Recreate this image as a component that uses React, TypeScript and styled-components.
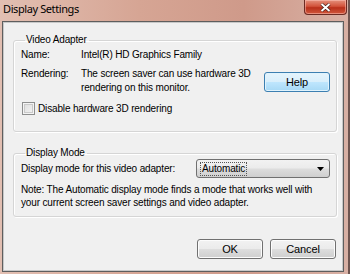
import styled, { createGlobalStyle } from "styled-components";

const GlobalStyle = createGlobalStyle`
  html, body {
    margin: 0;
    padding: 0;
    width: 350px;
    height: 274px;
    overflow: hidden;
  }
  body {
    font-family: "Liberation Sans", Arial, sans-serif;
    font-size: 10px;
    letter-spacing: -0.15px;
    white-space: nowrap;
    color: #000;
  }
`

const Window = styled.div`
  width: 350px;
  height: 274px;
  display: flex;
  flex-direction: column;
  background: linear-gradient(90deg, #e2bfb2 0%, #d6a594 40%, #cf9a8a 70%, #d8b0a4 100%);
  box-sizing: border-box;
  border-right: 2px solid #6e5550;
`

const TitleBar = styled.div`
  height: 21px;
  display: flex;
  justify-content: space-between;
  align-items: flex-start;
  padding-left: 3px;
  flex-shrink: 0;
`

const Title = styled.div`
  font-family: "Noto Sans", sans-serif;
  font-size: 11px;
  line-height: 12px;
  margin-top: 3px;
  letter-spacing: -0.4px;
`

const CloseButton = styled.div`
  width: 41px;
  height: 14px;
  margin-right: 1px;
  border: 1px solid #6b2a22;
  border-top: none;
  border-radius: 0 0 4px 4px;
  background: linear-gradient(180deg, #e4917d 0%, #d2533b 45%, #b8301a 55%, #d0573c 100%);
  display: flex;
  align-items: center;
  justify-content: center;
  box-shadow: inset 0 0 0 1px rgba(255, 200, 190, 0.5);
`

const Client = styled.div`
  flex: 1;
  margin: 0 4px 2px 2px;
  background: #f0f0f0;
  border: 1px solid #5e5e5e;
  box-shadow: inset 0 0 0 1px #c8c8c8;
  display: flex;
  flex-direction: column;
  padding: 12px 6px 0 10px;
`

const Group = styled.fieldset<{ height: number }>`
  margin: 0;
  height: ${(p) => p.height}px;
  box-sizing: border-box;
  border: 1px solid #d5d5d5;
  border-radius: 3px;
  box-shadow: inset 1px 1px 0 #fff, 1px 1px 0 #fff;
  padding: 0 7px;
  min-width: 0;
`

const Legend = styled.legend`
  padding: 0 2px 0 1px;
  margin-left: 4px;
  line-height: 12px;
`

const InfoRow = styled.div<{ gap: number }>`
  display: flex;
  align-items: flex-start;
  margin-top: ${(p) => p.gap}px;
  line-height: 14px;
`

const Label = styled.div`
  width: 60px;
  flex-shrink: 0;
`

const Value = styled.div`
  flex: 1;
`

const Button = styled.div<{ width: number }>`
  width: ${(p) => p.width}px;
  height: 20px;
  box-sizing: border-box;
  border: 1px solid #707070;
  border-radius: 3px;
  background: linear-gradient(180deg, #f2f2f2 0%, #ebebeb 48%, #dddddd 52%, #cfcfcf 100%);
  box-shadow: inset 0 0 0 1px #fcfcfc;
  display: flex;
  align-items: center;
  justify-content: center;
  font-size: 11px;
`

const FocusButton = styled(Button)`
  border-color: #3c7fb1;
  background: linear-gradient(180deg, #e5f4fc 0%, #d9effb 48%, #bee6fd 52%, #a7d9f5 100%);
  box-shadow: inset 0 0 0 1px #e0f3fd;
  margin-top: 5px;
  margin-right: -1px;
`

const CheckRow = styled.label`
  display: flex;
  align-items: center;
  gap: 3px;
  margin-top: 7px;
  margin-left: 1px;
`

const CheckBox = styled.span`
  width: 11px;
  height: 11px;
  border: 1px solid #8e8f8f;
  background: linear-gradient(135deg, #dcdcdc 0%, #f5f5f5 100%);
  box-shadow: inset 0 0 0 1px #f4f4f4, inset 0 0 0 2px #cacaca;
  flex-shrink: 0;
`

const ModeRow = styled.div`
  display: flex;
  justify-content: space-between;
  align-items: center;
  margin-top: 0;
  line-height: 14px;
`

const Select = styled.div`
  width: 134px;
  height: 19px;
  box-sizing: border-box;
  margin-right: -1px;
  border: 1px solid #707070;
  border-radius: 3px;
  background: linear-gradient(180deg, #f2f2f2 0%, #ebebeb 48%, #dddddd 52%, #cfcfcf 100%);
  display: flex;
  align-items: center;
  justify-content: space-between;
  padding: 0 5px 0 3px;
`

const SelectText = styled.span`
  border: 1px dotted #555;
  padding: 0 1px;
  line-height: 12px;
`

const Note = styled.div`
  margin-top: 5px;
  line-height: 13px;
`

const Footer = styled.div`
  display: flex;
  justify-content: flex-end;
  gap: 7px;
  margin-top: 22px;
  margin-right: 1px;
`

export default function App() {
  return (
    <>
      <GlobalStyle />
      <Window>
        <TitleBar>
          <Title>Display Settings</Title>
          <CloseButton>
            <svg width="11" height="9" viewBox="0 0 11 9">
              <path d="M1.5 1 L9.5 8 M9.5 1 L1.5 8" stroke="#3a1a14" strokeWidth="3.2" />
              <path d="M1.5 1 L9.5 8 M9.5 1 L1.5 8" stroke="#ffffff" strokeWidth="2" />
            </svg>
          </CloseButton>
        </TitleBar>
        <Client>
          <Group height={98}>
            <Legend>Video Adapter</Legend>
            <InfoRow gap={2}>
              <Label>Name:</Label>
              <Value>Intel(R) HD Graphics Family</Value>
            </InfoRow>
            <InfoRow gap={5}>
              <Label>Rendering:</Label>
              <Value>
                The screen saver can use hardware 3D
                <br />
                rendering on this monitor.
              </Value>
              <FocusButton width={66}>Help</FocusButton>
            </InfoRow>
            <CheckRow>
              <CheckBox />
              Disable hardware 3D rendering
            </CheckRow>
          </Group>
          <div style={{ height: 15 }} />
          <Group height={70}>
            <Legend>Display Mode</Legend>
            <ModeRow>
              <span>Display mode for this video adapter:</span>
              <Select>
                <SelectText>Automatic</SelectText>
                <svg width="7" height="4" viewBox="0 0 7 4">
                  <path d="M0 0 H7 L3.5 4 Z" fill="#000" />
                </svg>
              </Select>
            </ModeRow>
            <Note>
              Note: The Automatic display mode finds a mode that works well with
              <br />
              your current screen saver settings and video adapter.
            </Note>
          </Group>
          <Footer>
            <Button width={66}>OK</Button>
            <Button width={66}>Cancel</Button>
          </Footer>
        </Client>
      </Window>
    </>
  );
}
